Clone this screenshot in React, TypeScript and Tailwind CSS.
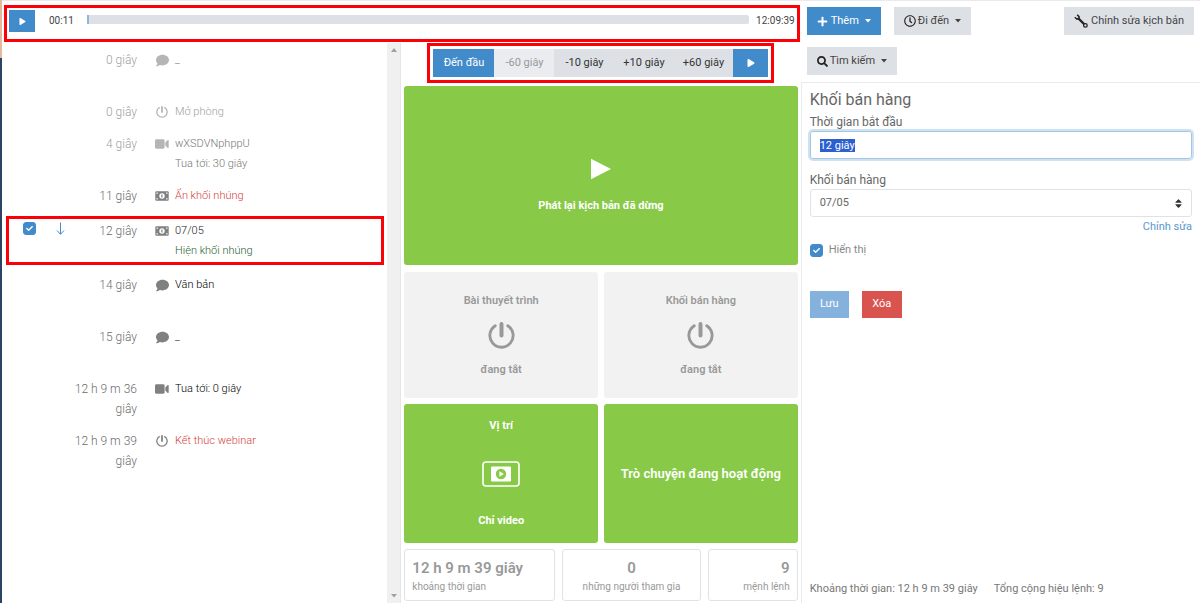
import { useState } from 'react';
import type { ReactNode } from 'react';
import { FaCheck, FaComment, FaPlay, FaPlus, FaRegClock, FaSearch, FaSort } from 'react-icons/fa';

interface ScriptItem {
  time: string;
  icon: 'comment' | 'power' | 'video' | 'money';
  title: string;
  subtitle?: string;
  titleClass: string;
  subtitleClass?: string;
  past?: boolean;
  selected?: boolean;
}

const items: ScriptItem[] = [
  { time: '0 giây', icon: 'comment', title: '_', subtitle: '', titleClass: 'text-[#777]', past: true },
  { time: '0 giây', icon: 'power', title: 'Mở phòng', titleClass: 'text-[#a0a0a0]', past: true },
  {
    time: '4 giây',
    icon: 'video',
    title: 'wXSDVNphppU',
    subtitle: 'Tua tới: 30 giây',
    titleClass: 'text-[#777]',
    subtitleClass: 'text-[#777]',
    past: true,
  },
  { time: '11 giây', icon: 'money', title: 'Ẩn khối nhúng', titleClass: 'text-[#d43f3a]' },
  {
    time: '12 giây',
    icon: 'money',
    title: '07/05',
    subtitle: 'Hiện khối nhúng',
    titleClass: 'text-[#222]',
    subtitleClass: 'text-[#2d6130]',
    selected: true,
  },
  { time: '14 giây', icon: 'comment', title: 'Văn bản', subtitle: '', titleClass: 'text-black' },
  { time: '15 giây', icon: 'comment', title: '_', subtitle: '', titleClass: 'text-[#222]' },
  { time: '12 h 9 m 36 giây', icon: 'video', title: 'Tua tới: 0 giây', titleClass: 'text-black' },
  { time: '12 h 9 m 39 giây', icon: 'power', title: 'Kết thúc webinar', titleClass: 'text-[#d43f3a]' },
];

function PowerIcon({ className }: { className: string }) {
  return (
    <svg viewBox="0 0 26 26" className={className} fill="none" stroke="currentColor" strokeLinecap="round">
      <path d="M7 3.6a11.2 11.2 0 1 0 12 0" strokeWidth="2.8" />
      <path d="M13 2v11" strokeWidth="3.8" />
    </svg>
  );
}

function VideoIcon() {
  return (
    <svg viewBox="0 0 14 10" className="w-[14px]" fill="currentColor">
      <rect x="0" y="0.3" width="9.6" height="9.4" rx="1.4" />
      <path d="M10.3 3.4 12.4 1.2q1.3-.6 1.3.6v6.4q0 1.2-1.3.6L10.3 6.6z" />
    </svg>
  );
}

function MoneyIcon() {
  return (
    <svg viewBox="0 0 14 10" className="w-[14px]">
      <rect x="0.3" y="0.3" width="13.4" height="9.4" rx="1" fill="currentColor" />
      <g fill="#fff">
        <circle cx="7" cy="5" r="2.7" />
        <rect x="1.5" y="1.5" width="1.3" height="1.3" />
        <rect x="11.2" y="1.5" width="1.3" height="1.3" />
        <rect x="1.5" y="7.2" width="1.3" height="1.3" />
        <rect x="11.2" y="7.2" width="1.3" height="1.3" />
      </g>
      <path d="M6.2 3.4h1.3v3.2H6.3V4.4z" fill="currentColor" />
    </svg>
  );
}

function WrenchIcon() {
  return (
    <svg viewBox="0 0 14 14" className="w-[14px] text-[#222]" fill="none" stroke="currentColor">
      <path d="m4 4 6.5 6.5" strokeWidth="2.4" />
      <path d="M.8 3.2 3 5.2 5 4.4 5 2.6 3.2.8" strokeWidth="1.5" />
      <circle cx="11.4" cy="11.4" r="1.8" strokeWidth="1.3" fill="#dde1e6" />
    </svg>
  );
}

function ItemIcon({ icon }: { icon: ScriptItem['icon'] }) {
  if (icon === 'comment') return <FaComment size={13} />;
  if (icon === 'power') return <PowerIcon className="w-3" />;
  if (icon === 'video') return <VideoIcon />;
  return <MoneyIcon />;
}

function Caret() {
  return (
    <svg viewBox="0 0 6 4" className="w-[6px]" fill="currentColor">
      <path d="M0 0h6L3 3.5z" />
    </svg>
  );
}

function Checkbox({ id, label }: { id: string; label?: string }) {
  const [checked, setChecked] = useState(true);
  return (
    <span className="relative inline-flex size-[13px] shrink-0">
      <input
        id={id}
        type="checkbox"
        aria-label={label}
        checked={checked}
        onChange={(e) => setChecked(e.target.checked)}
        className="size-[13px] appearance-none rounded-[3px] border border-[#428bca] checked:bg-[#428bca]"
      />
      {checked && <FaCheck size={7} className="pointer-events-none absolute inset-0 m-auto text-white" />}
    </span>
  );
}

function ScriptRow({ item }: { item: ScriptItem }) {
  return (
    <li
      className={
        item.selected
          ? 'mt-1 mr-[3px] mb-1 ml-1 flex border-3 border-[#fb0007] pt-0.5 pb-px pl-[14px]'
          : 'flex py-[6px] pl-[21px]'
      }
    >
      <div className="flex w-[50px] shrink-0 gap-5 pt-px">
        {item.selected && (
          <>
            <Checkbox id="item-selected" label={item.title} />
            <svg viewBox="0 0 9 13" className="h-[13px] w-[9px] text-[#428bca]" fill="none" stroke="currentColor">
              <path d="M4.5 0.5v11.5M1 8.5l3.5 3.8L8 8.5" />
            </svg>
          </>
        )}
      </div>
      <div className={`w-16 shrink-0 text-right text-[12px] leading-5 font-light ${item.past ? 'text-[#a0a0a0]' : 'text-[#6c6c6c]'}`}>
        {item.time}
      </div>
      <div className={`ml-[18px] flex h-5 w-[14px] shrink-0 items-center justify-center ${item.past ? 'text-[#b5b5b5]' : 'text-[#808080]'}`}>
        <ItemIcon icon={item.icon} />
      </div>
      <div className="ml-[6px] text-[11px] leading-5 font-light">
        <p className={item.titleClass}>{item.title}</p>
        {item.subtitle !== undefined && <p className={`min-h-5 ${item.subtitleClass ?? ''}`}>{item.subtitle}</p>}
      </div>
    </li>
  );
}

function StepButton({ children, className }: { children: ReactNode; className: string }) {
  return (
    <button type="button" className={`flex h-7 items-center justify-center whitespace-nowrap text-[11px] ${className}`}>
      {children}
    </button>
  );
}

function ToolButton({ children, className = 'bg-[#dde1e6] text-[#444]' }: { children: ReactNode; className?: string }) {
  return (
    <button type="button" className={`flex h-7 items-center justify-center whitespace-nowrap px-[10px] text-[11px] ${className}`}>
      {children}
    </button>
  );
}

function Player() {
  return (
    <div className="mt-1 mr-px ml-0.5 flex h-[37px] items-start border-3 border-[#fb0007] pt-0.5 pr-0.5 pl-0.5">
      <button type="button" aria-label="Phát" className="flex h-[22px] w-[26px] items-center justify-center bg-[#428bca] text-white">
        <FaPlay size={7} />
      </button>
      <span className="ml-[14px] w-[38px] text-[10px] leading-[22px] text-[#444]">00:11</span>
      <div className="mt-[5px] h-[9px] flex-1 rounded-r-[2px] bg-[#dde1e6]">
        <div className="h-full w-0.5 bg-[#8fb5d8]" />
      </div>
      <span className="ml-[7px] text-[10px] leading-[22px] text-[#444]">12:09:39</span>
    </div>
  );
}

function ScriptList() {
  return (
    <div className="flex w-1/2 border-r border-[#e4e6ea]">
      <ul className="flex-1 pt-px">
        {items.map((item, i) => (
          <ScriptRow key={i} item={item} />
        ))}
      </ul>
      <div className="flex w-[13px] flex-col items-center justify-between bg-[#f0f0f0] py-[5px] text-[#a0a0a0]">
        <svg viewBox="0 0 6 4" className="w-[6px]" fill="currentColor">
          <path d="M0 4h6L3 0z" />
        </svg>
        <Caret />
      </div>
    </div>
  );
}

function OffTile({ title }: { title: string }) {
  return (
    <div className="flex h-[126px] flex-1 flex-col items-center rounded-[3px] bg-[#f2f2f2] pt-[19px] text-[11px] leading-5 font-semibold text-[#999]">
      <p>{title}</p>
      <PowerIcon className="my-[11px] w-[27px]" />
      <p>đang tắt</p>
    </div>
  );
}

function Stat({ value, label, className }: { value: string; label: string; className: string }) {
  return (
    <div className={`rounded-[3px] border border-[#dfe2e7] px-[7px] pt-2 pb-1 whitespace-nowrap text-[#999] ${className}`}>
      <p className="text-[15px] leading-5 font-semibold">{value}</p>
      <p className="text-[10px] leading-[18px]">{label}</p>
    </div>
  );
}

function Stage() {
  return (
    <div className="flex w-1/2 flex-col pr-[3px] pl-[3px]">
      <div className="mx-auto flex border-3 border-[#fb0007] p-[3px]">
        <StepButton className="w-[61px] bg-[#428bca] text-white">Đến đầu</StepButton>
        <StepButton className="w-[60px] bg-[#eaecf0] text-[#999]">-60 giây</StepButton>
        <StepButton className="w-[60px] bg-[#dde1e6] text-[#333]">-10 giây</StepButton>
        <StepButton className="w-[59px] bg-[#dde1e6] text-[#333]">+10 giây</StepButton>
        <StepButton className="w-[60px] bg-[#dde1e6] text-[#333]">+60 giây</StepButton>
        <StepButton className="w-[35px] bg-[#428bca] text-white">
          <FaPlay size={8} aria-label="Phát" />
        </StepButton>
      </div>
      <div className="mt-[3px] flex h-[179px] flex-col items-center justify-center rounded-[3px] bg-[#88ca48] pt-[22px] text-white">
        <svg viewBox="0 0 20 22" className="w-5" fill="currentColor">
          <path d="M0 .8 20 11 0 21.2z" />
        </svg>
        <p className="mt-4 text-[11px] leading-5 font-bold">Phát lại kịch bản đã dừng</p>
      </div>
      <div className="mt-[7px] flex gap-[6px]">
        <OffTile title="Bài thuyết trình" />
        <OffTile title="Khối bán hàng" />
      </div>
      <div className="mt-[6px] flex h-[139px] gap-[6px] font-bold text-white">
        <div className="flex flex-1 flex-col items-center justify-between rounded-[3px] bg-[#88ca48] py-3 text-[11px] leading-5">
          <p>Vị trí</p>
          <svg viewBox="0 0 38 26" className="w-[38px]">
            <rect x="1" y="1" width="36" height="24" rx="3" fill="none" stroke="#fff" strokeWidth="1.6" />
            <rect x="9" y="5.5" width="20" height="15" rx="1.2" fill="#fff" />
            <circle cx="19" cy="13" r="5.2" fill="#88ca48" />
            <path d="m17.4 10.3 4.4 2.7-4.4 2.7z" fill="#fff" />
          </svg>
          <p>Chỉ video</p>
        </div>
        <div className="flex flex-1 items-center justify-center rounded-[3px] bg-[#88ca48] text-[13px] font-semibold">
          Trò chuyện đang hoạt động
        </div>
      </div>
      <div className="mt-[6px] flex gap-[7px]">
        <Stat value="12 h 9 m 39 giây" label="khoảng thời gian" className="w-[151px]" />
        <Stat value="0" label="những người tham gia" className="flex-1 text-center" />
        <Stat value="9" label="mệnh lệnh" className="w-[90px] text-right" />
      </div>
    </div>
  );
}

function Editor() {
  const [time, setTime] = useState('12 giây');

  return (
    <div className="flex w-1/3 shrink-0 flex-col text-[11px] text-[#666]">
      <div className="flex flex-wrap items-start gap-x-[13px] gap-y-3 px-[6px] pt-[6px] pb-[7px]">
        <ToolButton className="bg-[#428bca] text-white">
          <FaPlus size={11} />
          <span className="mr-[6px] ml-[3px]">Thêm</span>
          <Caret />
        </ToolButton>
        <ToolButton>
          <FaRegClock size={12} className="text-[#222]" />
          <span className="mr-[6px] ml-0.5">Đi đến</span>
          <Caret />
        </ToolButton>
        <ToolButton className="ml-auto bg-[#dde1e6] text-[#444]">
          <WrenchIcon />
          <span className="ml-[3px]">Chỉnh sửa kịch bản</span>
        </ToolButton>
        <ToolButton>
          <FaSearch size={11} className="text-[#222]" />
          <span className="mr-[6px] ml-0.5">Tìm kiếm</span>
          <Caret />
        </ToolButton>
      </div>
      <form className="flex flex-1 flex-col border-t border-l border-[#e8eaed] pr-2 pl-2" onSubmit={(e) => e.preventDefault()}>
        <h2 className="mt-[7px] text-[16px] leading-5">Khối bán hàng</h2>
        <label htmlFor="start" className="mt-[3px] text-[12px] leading-[18px]">
          Thời gian bắt đầu
        </label>
        <input
          id="start"
          type="text"
          value={time}
          autoFocus
          onFocus={(e) => e.target.select()}
          onChange={(e) => setTime(e.target.value)}
          className="h-7 rounded-[3px] border border-[#a3c6e4] px-[9px] ring-2 ring-[#cfe2f2] outline-none selection:bg-[#2c5fd0] selection:text-white"
        />
        <label htmlFor="block" className="mt-3 text-[12px] leading-[18px]">
          Khối bán hàng
        </label>
        <div className="relative">
          <select id="block" defaultValue="07/05" className="block h-7 w-full appearance-none rounded-[3px] border border-[#dfe2e7] px-[9px]">
            <option>07/05</option>
          </select>
          <FaSort size={11} className="pointer-events-none absolute inset-y-0 right-2 my-auto text-[#333]" />
        </div>
        <a href="#" className="mt-px self-end leading-[18px] text-[#5b97cf]">
          Chỉnh sửa
        </a>
        <div className="mt-[5px] flex h-[18px] items-center gap-[6px]">
          <Checkbox id="visible" />
          <label htmlFor="visible" className="text-[#888]">
            Hiển thị
          </label>
        </div>
        <div className="mt-8 flex gap-[13px]">
          <button type="submit" className="h-[27px] w-[39px] bg-[#84b2dc] text-white">
            Lưu
          </button>
          <button type="button" className="h-[27px] w-10 bg-[#d9534f] text-white">
            Xóa
          </button>
        </div>
        <div className="mt-auto flex gap-4 pb-[5px] leading-[18px] whitespace-nowrap text-[#777]">
          <span>Khoảng thời gian: 12 h 9 m 39 giây</span>
          <span>Tổng cộng hiệu lệnh: 9</span>
        </div>
      </form>
    </div>
  );
}

export default function App() {
  return (
    <div className="flex min-h-screen bg-white font-[Roboto,'Open_Sans',sans-serif]">
      <div className="flex w-0.5 shrink-0 flex-col bg-[#2b4463]">
        <div className="h-[58px] bg-[#e5b99c]" />
      </div>
      <div className="flex flex-1 border-t border-[#e8eaed]">
        <div className="flex flex-1 flex-col">
          <Player />
          <div className="flex flex-1 pt-px">
            <ScriptList />
            <Stage />
          </div>
        </div>
        <Editor />
      </div>
    </div>
  );
}
